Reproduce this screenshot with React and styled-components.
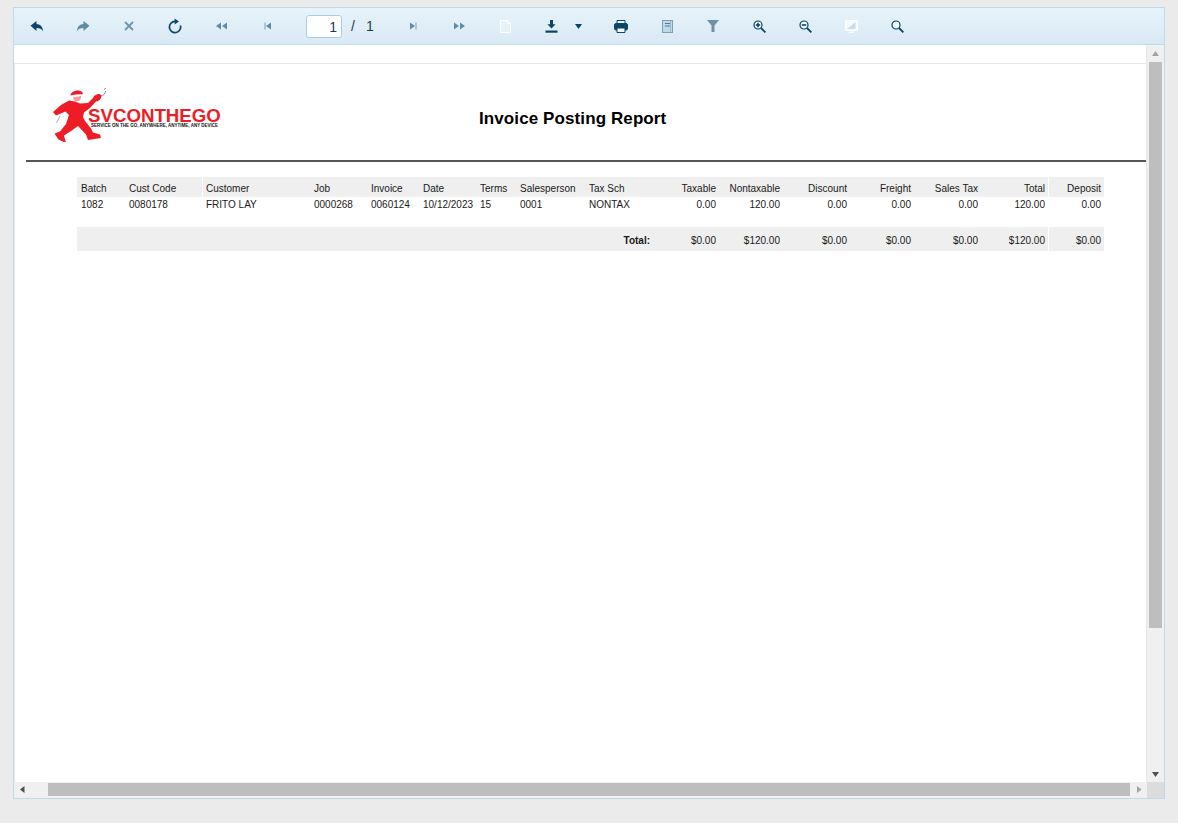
import React from "react";
import styled, { createGlobalStyle } from "styled-components";

const GlobalStyle = createGlobalStyle`
  html, body {
    margin: 0;
    height: 100%;
    overflow: hidden;
    background: #ebebeb;
    font-family: "Liberation Sans", Arial, sans-serif;
  }
`;

const Frame = styled.div`
  box-sizing: border-box;
  display: flex;
  flex-direction: column;
  width: 1152px;
  height: 792px;
  margin: 7px 0 0 13px;
  border: 1px solid #bcdcec;
  background: #fff;
`;

const Toolbar = styled.div`
  flex: none;
  display: flex;
  align-items: center;
  height: 36px;
  border-bottom: 1px solid #bcdcec;
  background: linear-gradient(#e7f3fa, #d9e9f4);
`;

const ToolButton = styled.div`
  flex: none;
  display: flex;
  align-items: center;
  justify-content: ${(p) => (p.$wide ? "flex-start" : "center")};
  width: ${(p) => (p.$wide ? "70px" : "46px")};
  height: 100%;
  padding-left: ${(p) => (p.$wide ? "17px" : "0")};
  box-sizing: border-box;
  gap: 17px;
`;

const Pager = styled.div`
  flex: none;
  display: flex;
  align-items: center;
  width: 100px;
  padding-left: 16px;
  box-sizing: border-box;
  font-size: 14px;
  color: #1c3d52;
`;

const PageInput = styled.div`
  box-sizing: border-box;
  width: 36px;
  height: 23px;
  padding-right: 4px;
  border: 1px solid #a9cfe2;
  border-radius: 3px;
  background: #fff;
  text-align: right;
  line-height: 22px;
`;

const PageSep = styled.span`
  margin-left: 9px;
`;

const PageTotal = styled.span`
  margin-left: 11px;
`;

const Middle = styled.div`
  flex: 1;
  min-height: 0;
  display: flex;
`;

const Viewer = styled.div`
  flex: 1;
  min-width: 0;
  padding-top: 18px;
  border-right: 1px solid #e6e6e6;
  background: #fff;
`;

const Page = styled.div`
  height: 100%;
  box-sizing: border-box;
  border-top: 1px solid #e6e6e6;
  border-left: 1px solid #e6e6e6;
  padding-left: 11px;
`;

const ReportHead = styled.div`
  display: flex;
  align-items: center;
  height: 96px;
  padding-left: 27px;
  border-bottom: 2px solid #555;
`;

const Title = styled.h1`
  margin: 14px 0 0 256px;
  font-size: 17px;
  font-weight: bold;
  line-height: 20px;
  letter-spacing: 0.1px;
  color: #000;
`;

const Table = styled.div`
  margin: 15px 0 0 51px;
  width: 1027px;
`;

const Row = styled.div`
  display: grid;
  grid-template-columns: 48px 77px 108px 57px 52px 57px 40px 69px 68px 66px 64px 67px 64px 67px 67px 56px;
  height: ${(p) => p.$height}px;
  margin-top: ${(p) => p.$top || 0}px;
  font-size: 10px;
  color: #1a1a1a;
`;

const Cell = styled.div`
  box-sizing: border-box;
  display: flex;
  align-items: center;
  justify-content: ${(p) => (p.$right ? "flex-end" : "flex-start")};
  padding-top: ${(p) => p.$padTop || 0}px;
  padding-bottom: ${(p) => p.$padBottom || 0}px;
  padding-right: 3px;
  padding-left: ${(p) => (p.$right ? "0" : p.$split ? "3px" : "4px")};
  white-space: nowrap;
  font-weight: ${(p) => (p.$bold ? "bold" : "normal")};
  background: ${(p) => (p.$shade ? "#efefef" : "transparent")};
  border-left: ${(p) => (p.$split ? "1px solid #fff" : "none")};
  grid-column: ${(p) => p.$span || "auto"};
`;

const VerticalBar = styled.div`
  flex: none;
  width: 17px;
  display: flex;
  flex-direction: column;
  background: #f0f0f0;
`;

const ArrowBox = styled.div`
  flex: none;
  width: 17px;
  height: ${(p) => p.$height || 17}px;
  display: flex;
  align-items: center;
  justify-content: center;
`;

const VerticalThumb = styled.div`
  width: 13px;
  height: 566px;
  margin-left: 2px;
  background: #bebebe;
`;

const VerticalRest = styled.div`
  flex: 1;
`;

const BottomBar = styled.div`
  flex: none;
  display: flex;
  height: 16px;
  background: #f0f0f0;
`;

const HorizontalThumb = styled.div`
  width: 1082px;
  height: 13px;
  margin: 1px 0 0 17px;
  background: #bebebe;
`;

const Corner = styled.div`
  flex: none;
  width: 17px;
  margin-left: auto;
  background: #dcdcdc;
`;

const dark = "#0b4666";
const mid = "#5f8ca3";

const Icon = ({ w = 16, h = 16, children }) => (
  <svg width={w} height={h} viewBox={`0 0 ${w} ${h}`}>
    {children}
  </svg>
);

const Reply = ({ color, flip }) => (
  <Icon w={14} h={13}>
    <path
      transform={flip ? "translate(14 0) scale(-1 1)" : undefined}
      fill={color}
      d="M.5 5.800 6.500 1v3c3.500.1 6 2.200 6.800 7.500-1.700-2.600-3.500-3.500-6.800-3.500v3.100z"
    />
  </Icon>
);

const Close = () => (
  <Icon w={10} h={10}>
    <path d="M1 1l8 8M9 1L1 9" stroke="#6b95a9" strokeWidth="1.8" />
  </Icon>
);

const Refresh = () => (
  <Icon w={14} h={16}>
    <path d="M7 3.400a5.600 5.600 0 1 0 5.400 4" fill="none" stroke={dark} strokeWidth="1.700" />
    <path d="M6.600.4v6l4.400-3z" fill={dark} />
  </Icon>
);

const DoubleArrow = ({ flip }) => (
  <Icon w={11} h={8}>
    <path
      transform={flip ? "translate(11 0) scale(-1 1)" : undefined}
      fill={mid}
      d="M5 .5v7L0 4zM11 .5v7L6 4z"
    />
  </Icon>
);

const StepArrow = ({ flip }) => (
  <Icon w={7} h={8}>
    <g transform={flip ? "translate(7 0) scale(-1 1)" : undefined}>
      <rect x="0" y="0.5" width="2" height="7" fill="#a9c7d5" />
      <path d="M7 .5v7L2 4z" fill={mid} />
    </g>
  </Icon>
);

const BlankDoc = () => (
  <Icon w={11} h={13}>
    <path d="M.5.5h7l3 3v9H.5z" fill="#e6f1f8" stroke="#fff" />
    <path d="M7.500.5v3h3" fill="none" stroke="#fff" />
  </Icon>
);

const Download = () => (
  <Icon w={13} h={13}>
    <path d="M5 0h3v4.200h2.600L6.500 8.400 2.400 4.200H5z" fill={dark} />
    <rect x="0.5" y="10.500" width="12" height="2.200" fill={dark} />
  </Icon>
);

const Caret = () => (
  <Icon w={7} h={5}>
    <path d="M0 0h7L3.500 5z" fill={dark} />
  </Icon>
);

const Printer = () => (
  <Icon w={14} h={13}>
    <path d="M3 .5h8v3.500H3z" fill="#e9f3f8" stroke={dark} />
    <rect x="0.500" y="3.500" width="13" height="6.500" rx="1.500" fill={dark} stroke={dark} />
    <path d="M3 8h8v4.500H3z" fill="#f1f7fa" stroke={dark} />
  </Icon>
);

const Report = () => (
  <Icon w={11} h={13}>
    <rect x="0.5" y="0.5" width="10" height="12" fill="#bfd9e8" stroke="#7d9fb2" />
    <path d="M3 3.500h5M3 6h5" stroke="#56788c" />
    <path d="M8.500 1v11" stroke="#9dbccc" />
  </Icon>
);

const Filter = () => (
  <Icon w={12} h={12}>
    <path d="M0 0h12L7.500 5.500V12h-3V5.500z" fill="#6b92a7" />
  </Icon>
);

const Glass = ({ sign }) => (
  <Icon w={13} h={13}>
    <circle cx="5" cy="5" r="4" fill="#f3f9fc" stroke={dark} strokeWidth="1.200" />
    <path d="M8 8l4.400 4.400" stroke={dark} strokeWidth="1.800" />
    {sign && <path d="M2.800 5h4.400" stroke={dark} strokeWidth="1.600" />}
    {sign === "plus" && <path d="M5 2.800v4.400" stroke={dark} strokeWidth="1.600" />}
  </Icon>
);

const Monitor = () => (
  <Icon w={13} h={13}>
    <rect x="0.5" y="0.5" width="12" height="10" rx="1" fill="#f4f9fc" stroke="#fff" />
    <path d="M2 9l8.500-7v7z" fill="#ccdbe4" />
    <path d="M4 11.500h5V13H4z" fill="#fff" />
  </Icon>
);

const Triangle = ({ d, color, w = 9, h = 9 }) => (
  <Icon w={w} h={h}>
    <path d={d} fill={color} />
  </Icon>
);

const Logo = () => (
  <svg width="170" height="60" viewBox="0 0 170 60">
    <g transform="translate(-53 -82)" fill="#ee1c25">
      <path d="M70.500 95.500c0-3 4-5.500 8-5 3 .4 4.800 2 4.200 3.800-4-.2-8.200.2-12.200 1.200z" />
      <path d="M73 97.500l8-1.500c.4 2-.6 4.200-2.400 5l-3 .2c-1.500-.8-2.400-2.200-2.600-3.700z" opacity="0.45" />
      <path d="M53 112 61 105 69 100.500 75 101.500 80 103.500 88 103 93 98C94 95 97 94 99 94 101 94 102 96 101 98 100 100 98 101.500 96 101.500L90 108 84 112.500 83 117 85 121 91 128.500 93 132.500 100 134.500 101 138 88 140 86 134.500 78 126 71 131 64 135.500 66 143 58.500 139.500 54.500 133.500 60 131.500 66 124 69 115 65.500 111.500 56 115.500z" />
      <path d="M101 96c2.500-.5 4.500-2.500 4.500-5" fill="none" stroke="#8a8a8a" strokeWidth="1" />
      <path d="M104 89.500l2 -1.500" fill="none" stroke="#8a8a8a" strokeWidth="1" />
      <path d="M60 116l-3.500 7" fill="none" stroke="#aaaaaa" strokeWidth="1" />
    </g>
    <text x="35" y="40" fill="#ee1c25" fontFamily="Liberation Sans, sans-serif" fontWeight="700" fontSize="18.700">
      SVCONTHEGO
    </text>
    <text x="38" y="45" fill="#111" fontFamily="Liberation Sans, sans-serif" fontWeight="700" fontSize="4.500">
      SERVICE ON THE GO, ANYWHERE, ANYTIME, ANY DEVICE
    </text>
  </svg>
);

const headers = ["Batch", "Cust Code", "Customer", "Job", "Invoice", "Date", "Terms", "Salesperson", "Tax Sch", "Taxable", "Nontaxable", "Discount", "Freight", "Sales Tax", "Total", "Deposit"];
const values = ["1082", "0080178", "FRITO LAY", "0000268", "0060124", "10/12/2023", "15", "0001", "NONTAX", "0.00", "120.00", "0.00", "0.00", "0.00", "120.00", "0.00"];
const totals = ["$0.00", "$120.00", "$0.00", "$0.00", "$0.00", "$120.00", "$0.00"];
const splitAt = ["Customer", "Deposit"];

const App = () => {
  return (
    <>
      <GlobalStyle />
      <Frame>
        <Toolbar>
          <ToolButton><Reply color={dark} /></ToolButton>
          <ToolButton><Reply color={mid} flip /></ToolButton>
          <ToolButton><Close /></ToolButton>
          <ToolButton><Refresh /></ToolButton>
          <ToolButton><DoubleArrow /></ToolButton>
          <ToolButton><StepArrow /></ToolButton>
          <Pager>
            <PageInput>1</PageInput>
            <PageSep>/</PageSep>
            <PageTotal>1</PageTotal>
          </Pager>
          <ToolButton><StepArrow flip /></ToolButton>
          <ToolButton><DoubleArrow flip /></ToolButton>
          <ToolButton><BlankDoc /></ToolButton>
          <ToolButton $wide><Download /><Caret /></ToolButton>
          <ToolButton><Printer /></ToolButton>
          <ToolButton><Report /></ToolButton>
          <ToolButton><Filter /></ToolButton>
          <ToolButton><Glass sign="plus" /></ToolButton>
          <ToolButton><Glass sign="minus" /></ToolButton>
          <ToolButton><Monitor /></ToolButton>
          <ToolButton><Glass /></ToolButton>
        </Toolbar>
        <Middle>
          <Viewer>
            <Page>
              <ReportHead>
                <Logo />
                <Title>Invoice Posting Report</Title>
              </ReportHead>
              <Table>
                <Row $height={20}>
                  {headers.map((h, i) => (
                    <Cell key={h} $shade $padTop={3} $right={i > 8} $split={splitAt.includes(h)}>{h}</Cell>
                  ))}
                </Row>
                <Row $height={16}>
                  {values.map((v, i) => (
                    <Cell key={i} $padBottom={1} $right={i > 8}>{v}</Cell>
                  ))}
                </Row>
                <Row $height={24} $top={14}>
                  <Cell $shade $padTop={3} $right $bold $span="1 / span 9">Total:</Cell>
                  {totals.map((t, i) => (
                    <Cell key={i} $shade $padTop={3} $right $split={i === 6}>{t}</Cell>
                  ))}
                </Row>
              </Table>
            </Page>
          </Viewer>
          <VerticalBar>
            <ArrowBox><Triangle d="M1 7h7L4.500 2z" color="#a3a3a3" /></ArrowBox>
            <VerticalThumb />
            <VerticalRest />
            <ArrowBox><Triangle d="M1 3h7L4.500 8z" color="#505050" /></ArrowBox>
          </VerticalBar>
        </Middle>
        <BottomBar>
          <ArrowBox $height={15}><Triangle d="M6.500 1v7L2 4.500z" color="#505050" /></ArrowBox>
          <HorizontalThumb />
          <ArrowBox $height={15}><Triangle d="M3 1v7l4.500-3.500z" color="#a3a3a3" /></ArrowBox>
          <Corner />
        </BottomBar>
      </Frame>
    </>
  );
};

export default App;
